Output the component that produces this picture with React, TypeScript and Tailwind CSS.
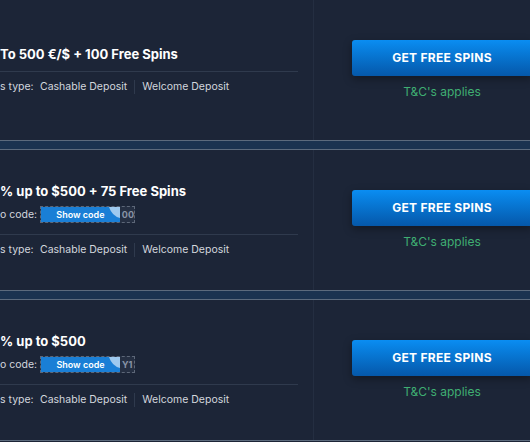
import React from 'react';

type Offer = {
  title: string;
  code?: string;
};

const offers: Offer[] = [
  { title: 'To 500 €/$ + 100 Free Spins' },
  { title: '% up to $500 + 75 Free Spins', code: '00' },
  { title: '% up to $500', code: 'Y1' },
];

function PromoCode({ code }: { code: string }) {
  return (
    <div className="mt-[7px] flex items-center">
      <span className="w-[40px] text-[10.5px] leading-[14px] text-[#d3d7de]">o code:</span>
      <div className="relative flex h-[17px] w-[95px] items-center border border-dashed border-[#5d6778] bg-[#252f42]">
        <div className="relative flex h-full w-[79px] items-center justify-center bg-[#1a7fd6] text-[9px] font-semibold text-white">
          Show code
          <svg className="absolute right-0 top-0" width="11" height="11" viewBox="0 0 11 11">
            <path d="M0 0 H11 V11 Q3 9 0 0 Z" fill="#9ec9ef" />
          </svg>
        </div>
        <span className="pl-[2px] text-[9px] font-bold text-[#8893a6]">{code}</span>
      </div>
    </div>
  );
}

function OfferCard({ offer }: { offer: Offer }) {
  return (
    <div className="flex h-[140px]">
      {/* left: bonus info */}
      <div className="flex w-[313px] shrink-0 flex-col justify-center pr-[15px]">
        <h3 className="text-[13px] font-bold leading-[16px] text-white">{offer.title}</h3>
        {offer.code && <PromoCode code={offer.code} />}
        <div className={`h-px bg-[#2f3a4d] ${offer.code ? 'mt-[11px]' : 'mt-[9px]'}`} />
        <div className="mt-[8px] flex items-center text-[10.5px] leading-[14px] text-[#d3d7de]">
          <span className="w-[40px]">s type:</span>
          <span>Cashable Deposit</span>
          <span className="mx-[7px] h-[14px] w-px bg-[#2f3a4d]" />
          <span>Welcome Deposit</span>
        </div>
      </div>

      {/* right: call to action */}
      <div className="flex min-w-0 flex-1 flex-col justify-center border-l border-[#242e41] pl-[38px]">
        <button className="flex h-[36px] w-[180px] shrink-0 items-center justify-center rounded-[3px] bg-gradient-to-b from-[#0a8df2] to-[#0558aa] text-[12px] font-bold tracking-[0.3px] text-white shadow-[0_3px_8px_rgba(0,0,0,0.35)]">
          GET FREE SPINS
        </button>
        <p className="mt-[8px] w-[180px] shrink-0 text-center text-[12px] leading-[16px] text-[#3fae72]">
          T&amp;C&apos;s applies
        </p>
      </div>
    </div>
  );
}

function Separator() {
  return <div className="h-[10px] border-y border-[#5c6b7d] bg-[#1b3350]" />;
}

export default function App() {
  return (
    <div
      className="h-[442px] w-[530px] overflow-hidden bg-[#1c2537]"
      style={{ fontFamily: 'Inter, "Noto Sans", sans-serif' }}
    >
      <OfferCard offer={offers[0]} />
      <Separator />
      <OfferCard offer={offers[1]} />
      <Separator />
      <OfferCard offer={offers[2]} />
      <div className="h-px bg-[#5c6b7d]" />
    </div>
  );
}
